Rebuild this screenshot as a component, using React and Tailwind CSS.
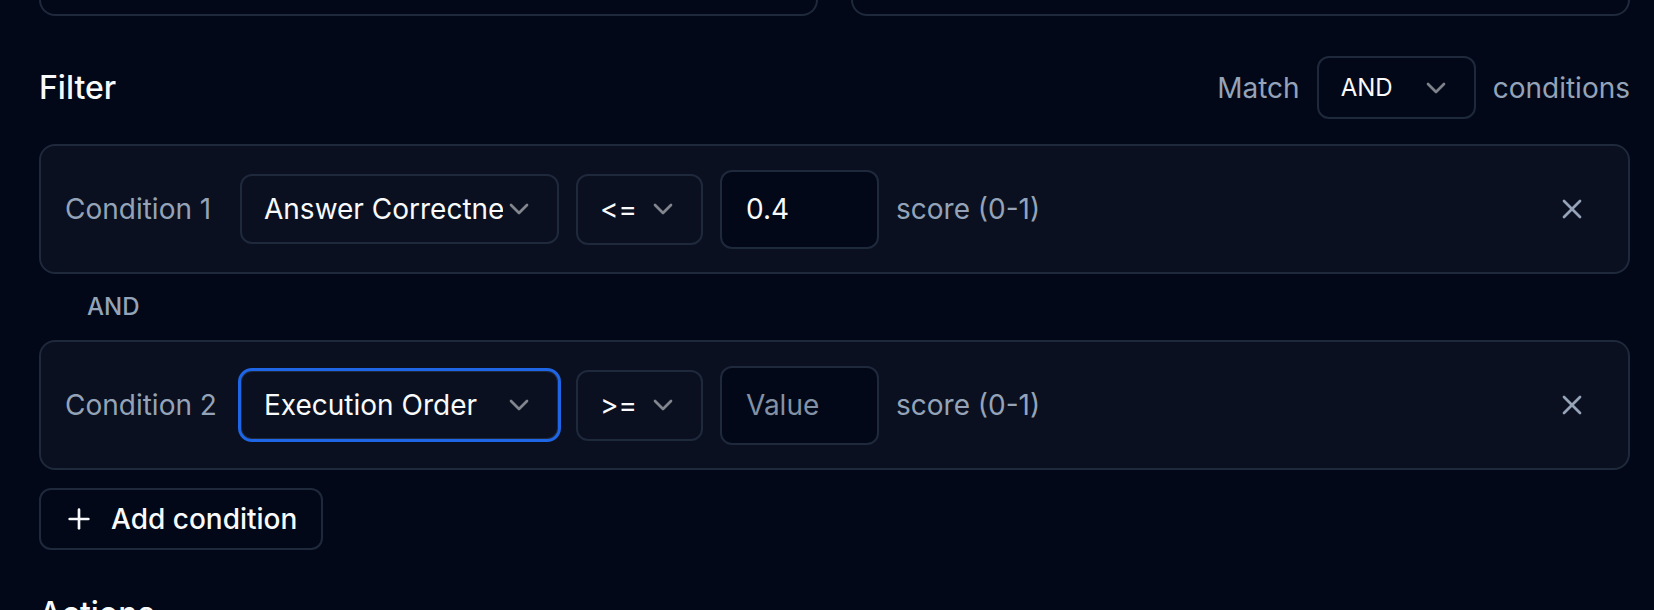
import React from "react";

function Chevron() {
  return (
    <svg width="32" height="32" viewBox="0 0 24 24" fill="none" stroke="currentColor" strokeWidth="2" strokeLinecap="round" strokeLinejoin="round" className="shrink-0 opacity-50">
      <path d="m6 9 6 6 6-6" />
    </svg>
  );
}

function XIcon() {
  return (
    <svg width="32" height="32" viewBox="0 0 24 24" fill="none" stroke="currentColor" strokeWidth="2" strokeLinecap="round" strokeLinejoin="round">
      <path d="M18 6 6 18" />
      <path d="m6 6 12 12" />
    </svg>
  );
}

function PlusIcon() {
  return (
    <svg width="32" height="32" viewBox="0 0 24 24" fill="none" stroke="currentColor" strokeWidth="2" strokeLinecap="round" strokeLinejoin="round" className="shrink-0">
      <path d="M5 12h14" />
      <path d="M12 5v14" />
    </svg>
  );
}

function ConditionCard({ label, field, op, value, focused }) {
  return (
    <div className="flex h-[130px] items-center gap-[17px] rounded-[16px] border-2 border-[#1e293b] bg-[#0a101f] px-[24px]">
      <span className="w-[158px] shrink-0 text-[28px] leading-[40px] text-[#94a3b8]">{label}</span>
      <div
        className={
          focused
            ? "flex h-[70px] w-[319px] shrink-0 items-center rounded-[12px] border-2 border-[#1e293b] px-[22px] outline outline-[3px] outline-offset-[-1px] outline-[#1e66e6]"
            : "flex h-[70px] w-[319px] shrink-0 items-center rounded-[12px] border-2 border-[#1e293b] px-[22px]"
        }
      >
        <span className="min-w-0 flex-1 overflow-hidden whitespace-nowrap text-[28px] leading-[40px] text-[#f8fafc]">{field}</span>
        <Chevron />
      </div>
      <div className="flex h-[71px] w-[127px] shrink-0 items-center justify-between rounded-[12px] border-2 border-[#1e293b] px-[22px]">
        <span className="text-[28px] leading-[40px] text-[#f8fafc]">{op}</span>
        <Chevron />
      </div>
      <div className="flex h-[79px] w-[159px] shrink-0 items-center rounded-[12px] border-2 border-[#1e293b] bg-[#020817] px-[24px]">
        {value ? (
          <span className="text-[28px] leading-[40px] text-[#f8fafc]">{value}</span>
        ) : (
          <span className="text-[28px] leading-[40px] text-[#8391a5]">Value</span>
        )}
      </div>
      <span className="shrink-0 text-[28px] leading-[40px] text-[#94a3b8]">score (0-1)</span>
      <button className="ml-auto flex h-[64px] w-[64px] shrink-0 items-center justify-center text-[#94a3b8]">
        <XIcon />
      </button>
    </div>
  );
}

export default function App() {
  return (
    <div className="h-[610px] w-[1654px] overflow-hidden bg-[#020817] pl-[39px] pr-[24px] font-['Inter',sans-serif] text-[#f8fafc]">
      <div className="grid grid-cols-2 gap-[33px]">
        <div className="h-[16px] rounded-b-[16px] border-2 border-t-0 border-[#1e293b]" />
        <div className="h-[16px] rounded-b-[16px] border-2 border-t-0 border-[#1e293b]" />
      </div>

      <div className="mt-[40px] flex h-[63px] items-center justify-between">
        <h2 className="text-[32px] font-medium leading-[48px]">Filter</h2>
        <div className="flex items-center gap-[17px]">
          <span className="text-[28px] leading-[40px] text-[#94a3b8]">Match</span>
          <button className="flex h-[63px] w-[159px] items-center justify-between rounded-[12px] border-2 border-[#1e293b] px-[22px] text-[24px] leading-[32px] text-[#f8fafc]">
            <span>AND</span>
            <Chevron />
          </button>
          <span className="text-[28px] leading-[40px] text-[#94a3b8]">conditions</span>
        </div>
      </div>

      <div className="mt-[25px] flex flex-col">
        <ConditionCard label="Condition 1" field="Answer Correctness" op="<=" value="0.4" />
        <div className="py-[17px] pl-[48px] text-[24px] font-medium leading-[32px] text-[#94a3b8]">AND</div>
        <ConditionCard label="Condition 2" field="Execution Order" op=">=" value="" focused />
      </div>

      <button className="mt-[18px] flex h-[62px] w-[284px] items-center gap-[16px] rounded-[12px] border-2 border-[#1e293b] px-[22px] text-[28px] font-medium leading-[40px] text-[#f8fafc]">
        <PlusIcon />
        <span>Add condition</span>
      </button>

      <h2 className="mt-[40px] text-[32px] font-medium leading-[48px]">Actions</h2>
    </div>
  );
}
